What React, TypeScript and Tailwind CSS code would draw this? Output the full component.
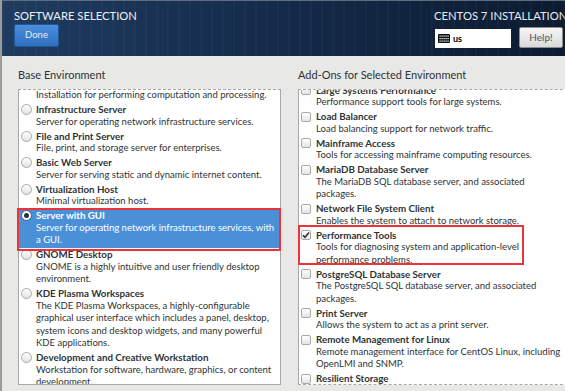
import React from "react";

type Item = {
  title: string;
  lines: string[];
  selected?: boolean;
  checked?: boolean;
};

const baseEnvironments: Item[] = [
  { title: "Compute Node", lines: ["Installation for performing computation and processing."] },
  { title: "Infrastructure Server", lines: ["Server for operating network infrastructure services."] },
  { title: "File and Print Server", lines: ["File, print, and storage server for enterprises."] },
  { title: "Basic Web Server", lines: ["Server for serving static and dynamic internet content."] },
  { title: "Virtualization Host", lines: ["Minimal virtualization host."] },
  {
    title: "Server with GUI",
    lines: ["Server for operating network infrastructure services, with", "a GUI."],
    selected: true
  },
  { title: "GNOME Desktop", lines: ["GNOME is a highly intuitive and user friendly desktop", "environment."] },
  {
    title: "KDE Plasma Workspaces",
    lines: [
      "The KDE Plasma Workspaces, a highly-configurable",
      "graphical user interface which includes a panel, desktop,",
      "system icons and desktop widgets, and many powerful",
      "KDE applications."
    ]
  },
  {
    title: "Development and Creative Workstation",
    lines: ["Workstation for software, hardware, graphics, or content", "development."]
  }
];

const addOns: Item[] = [
  { title: "Large Systems Performance", lines: ["Performance support tools for large systems."] },
  { title: "Load Balancer", lines: ["Load balancing support for network traffic."] },
  { title: "Mainframe Access", lines: ["Tools for accessing mainframe computing resources."] },
  { title: "MariaDB Database Server", lines: ["The MariaDB SQL database server, and associated", "packages."] },
  { title: "Network File System Client", lines: ["Enables the system to attach to network storage."] },
  {
    title: "Performance Tools",
    lines: ["Tools for diagnosing system and application-level", "performance problems."],
    checked: true
  },
  { title: "PostgreSQL Database Server", lines: ["The PostgreSQL SQL database server, and associated", "packages."] },
  { title: "Print Server", lines: ["Allows the system to act as a print server."] },
  {
    title: "Remote Management for Linux",
    lines: ["Remote management interface for CentOS Linux, including", "OpenLMI and SNMP."]
  },
  { title: "Resilient Storage", lines: ["Clustered storage, including the GFS2 file system."] }
];

function KeyboardIcon() {
  return (
    <svg width="12" height="9" viewBox="0 0 12 9" className="shrink-0">
      <rect x="0" y="0" width="12" height="9" rx="1" fill="#111" />
      {[1.5, 4, 6.5].map((y) =>
        [1.5, 3.5, 5.5, 7.5, 9.5].map((x) => (
          <rect key={`${x}-${y}`} x={x} y={y} width="1.2" height="1.2" fill="#fff" />
        ))
      )}
    </svg>
  );
}

function Radio({ selected }: { selected?: boolean }) {
  if (selected) {
    return (
      <div className="mt-[1px] flex h-[11px] w-[11px] shrink-0 items-center justify-center rounded-full border border-[#2f5f94] bg-white">
        <div className="h-[5px] w-[5px] rounded-full bg-[#2e3436]" />
      </div>
    );
  }
  return (
    <div className="mt-[1px] h-[11px] w-[11px] shrink-0 rounded-full border border-[#a9a9a9] bg-gradient-to-b from-white to-[#e2e2e2]" />
  );
}

function Checkbox({ checked }: { checked?: boolean }) {
  return (
    <div className="mt-[1.5px] flex h-[10px] w-[10px] shrink-0 items-center justify-center rounded-[2px] border border-[#a9a9a9] bg-gradient-to-b from-white to-[#e4e4e4]">
      {checked && (
        <svg width="8" height="8" viewBox="0 0 8 8">
          <path d="M1 4.2 L3 6.3 L7 1.5" fill="none" stroke="#2e3436" strokeWidth="1.6" />
        </svg>
      )}
    </div>
  );
}

function Row({ item, kind }: { item: Item; kind: "radio" | "check" }) {
  return (
    <div
      className={`flex items-start py-[0.75px] pl-[2px] ${kind === "radio" ? "gap-[4px]" : "gap-[5px]"} ${
        item.selected ? "bg-[#4a90d9] text-white" : "text-[#2e3436]"
      }`}
    >
      {kind === "radio" ? <Radio selected={item.selected} /> : <Checkbox checked={item.checked} />}
      <div className="flex flex-col text-[9.5px] leading-[12.5px]">
        <span className="whitespace-nowrap text-[9.75px] font-bold">{item.title}</span>
        {item.lines.map((line) => (
          <span key={line} className="whitespace-nowrap">
            {line}
          </span>
        ))}
      </div>
    </div>
  );
}

export default function App() {
  return (
    <div className="relative flex h-[391px] w-[565px] overflow-hidden bg-[#e8e8e7] font-['Lato','Liberation_Sans',sans-serif]">
      <div className="w-[2px] shrink-0 bg-[#9c9c9c]" />

      <div className="flex min-w-0 flex-1 flex-col">
        <header className="flex h-[56px] shrink-0 border-t border-[#5f6e7f] bg-[repeating-linear-gradient(90deg,rgba(255,255,255,0.025)_0px,rgba(255,255,255,0.025)_2px,transparent_2px,transparent_11px),linear-gradient(90deg,#1f3c60,#152c4c_45%,#0c1b30)] pt-[8px]">
          <div className="flex flex-1 flex-col items-start pl-[12px]">
            <h1 className="whitespace-nowrap text-[11.25px] leading-[13px] text-[#eef1f5]">SOFTWARE SELECTION</h1>
            <button className="mt-[2px] h-[23px] w-[45px] rounded-[2px] border border-[#1f5699] bg-gradient-to-b from-[#4b8fdc] to-[#306fc0] text-[9.5px] text-[#e3ecf7]">
              Done
            </button>
          </div>
          <div className="flex w-[131px] shrink-0 flex-col">
            <span className="whitespace-nowrap text-[11.25px] leading-[13px] text-[#e6ebf1]">CENTOS 7 INSTALLATION</span>
            <div className="ml-[1px] mt-[5px] flex items-end gap-[8px]">
              <div className="flex h-[19px] w-[76px] items-center gap-[3px] bg-white pl-[3px]">
                <KeyboardIcon />
                <span className="text-[9px] font-bold text-black">us</span>
              </div>
              <button className="h-[21px] w-[44px] rounded-[2px] border border-[#8d8d8d] bg-gradient-to-b from-[#f6f6f6] to-[#dadada] text-[10px] text-[#555]">
                Help!
              </button>
            </div>
          </div>
        </header>

        <main className="flex gap-[17px] pl-[16px] pt-[12px]">
          <section className="flex w-[263px] shrink-0 flex-col">
            <h2 className="whitespace-nowrap text-[11px] leading-[13px] text-[#2e3436]">Base Environment</h2>
            <div className="mt-[8px] h-[296px] overflow-hidden border border-[#a8a8a8] bg-white [border-top-style:dashed]">
              <div className="-mt-[14px] flex flex-col">
                {baseEnvironments.map((item) => (
                  <Row key={item.title} item={item} kind="radio" />
                ))}
              </div>
            </div>
          </section>

          <section className="flex w-[290px] shrink-0 flex-col">
            <h2 className="whitespace-nowrap text-[11px] leading-[13px] text-[#2e3436]">Add-Ons for Selected Environment</h2>
            <div className="mt-[8px] h-[296px] overflow-hidden border border-[#a8a8a8] bg-white [border-top-style:dashed] [border-bottom-style:dashed]">
              <div className="-mt-[7px] flex flex-col">
                {addOns.map((item) => (
                  <Row key={item.title} item={item} kind="check" />
                ))}
              </div>
            </div>
          </section>
        </main>
      </div>

      {/* annotation frames */}
      <div className="pointer-events-none absolute left-[17px] top-[208px] h-[43px] w-[264px] border-2 border-[#ec3338]" />
      <div className="pointer-events-none absolute left-[298px] top-[225px] h-[40px] w-[226px] border-2 border-[#ec3338]" />
    </div>
  );
}
